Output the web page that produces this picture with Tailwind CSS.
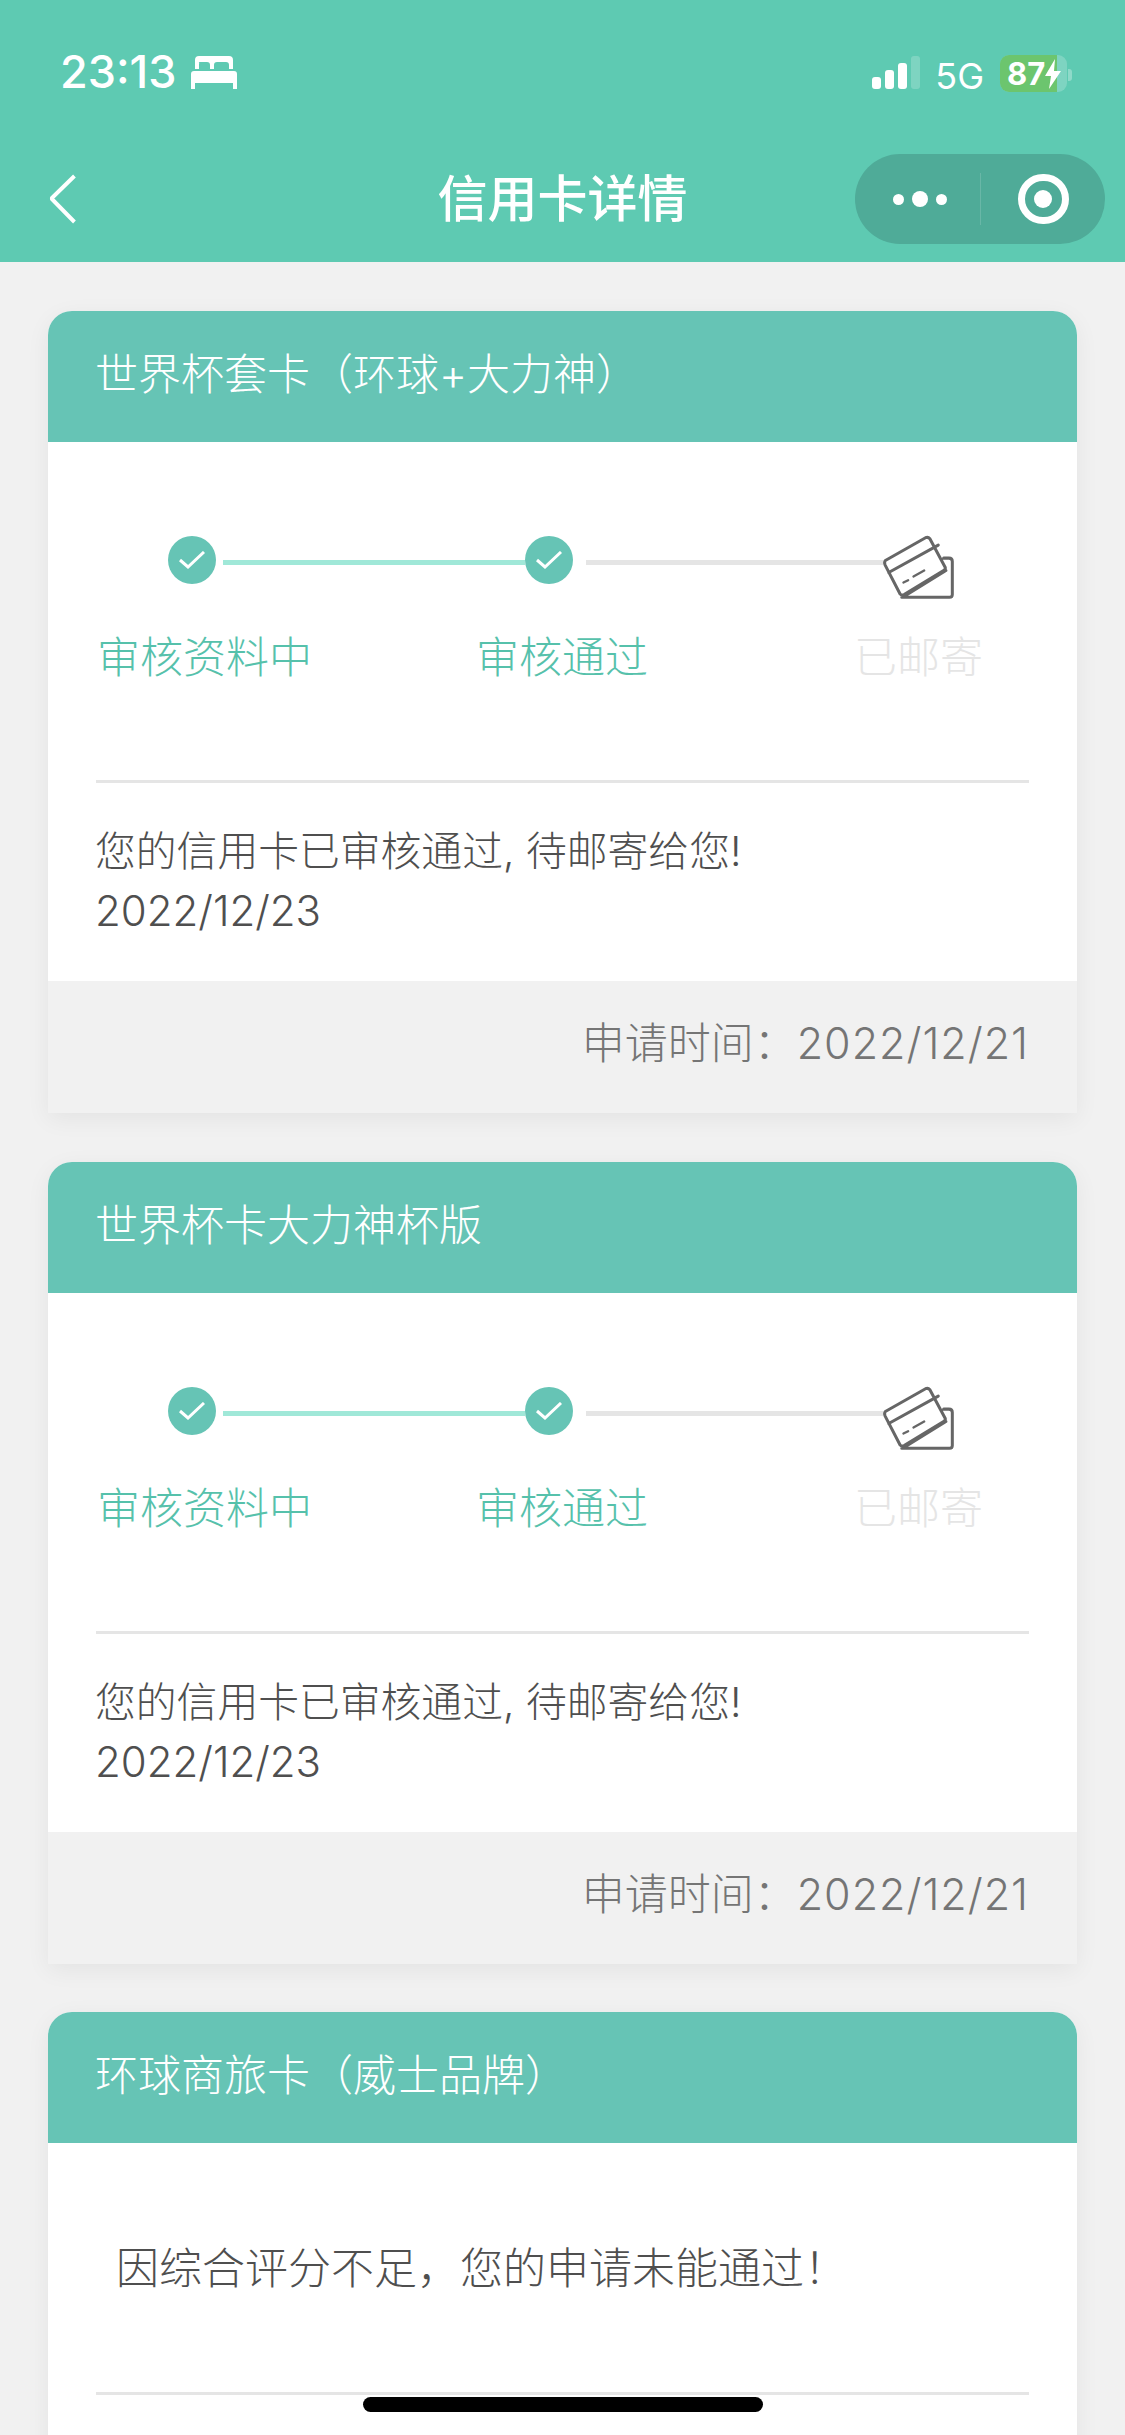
<!DOCTYPE html>
<html lang="zh-CN">
<head>
<meta charset="utf-8">
<title>信用卡详情</title>
<script src="https://cdn.jsdelivr.net/npm/@tailwindcss/browser@4"></script>
</head>
<body class="m-0">
<div class="relative w-[1125px] h-[2435px] overflow-hidden bg-[#f1f1f1] font-['Inter','Noto_Sans_CJK_SC',sans-serif]">
  <header class="h-[262px] bg-[#5ecab2] text-white">
    <div class="h-[154px] pt-[52px] pl-[60px] pr-[53px] flex items-start justify-between">
      <div class="flex items-center h-[40px]">
        <span class="text-[45px] leading-[40px] font-medium">23:13</span>
        <svg class="ml-[15px] mt-[1px]" width="46" height="33" viewBox="0 0 46 33" fill="#fff"><path d="M4 13V4a4 4 0 0 1 4-4h30a4 4 0 0 1 4 4v9h-4V9c0-2-1-3-3-3h-9c-2 0-3 1-3 3v4h-4V9c0-2-1-3-3-3h-9C9 6 8 7 8 9v4z"/><path d="M3 15h40a3 3 0 0 1 3 3v9H0v-9a3 3 0 0 1 3-3zM0 27h4v6H0zM42 27h4v6h-4z"/></svg>
      </div>
      <div class="flex items-end h-[38px]">
        <div class="flex items-end gap-[4px] h-[34px] mb-[1px]">
          <span class="w-[9px] h-[12px] rounded-[3px] bg-white"></span>
          <span class="w-[9px] h-[19px] rounded-[3px] bg-white"></span>
          <span class="w-[9px] h-[26px] rounded-[3px] bg-white"></span>
          <span class="w-[9px] h-[33px] rounded-[3px] bg-white/20"></span>
        </div>
        <span class="ml-[15px] text-[36px] leading-[30px] mb-[-1px]">5G</span>
        <div class="relative ml-[16px] w-[67px] h-[37px] mb-[-2px] flex items-center rounded-[9px] overflow-hidden bg-white/20">
          <span class="absolute left-0 top-0 h-full w-[57px] bg-[#6cc56e]"></span>
          <span class="relative ml-[7px] font-bold text-[31px] leading-[37px]">87</span>
          <svg class="relative ml-[-1px]" width="18" height="30" viewBox="0 0 18 30" fill="#fff"><path d="M11 0 1 17h6l-2 13L17 12h-7z"/></svg>
        </div>
        <span class="ml-[1px] mb-[9px] w-[4px] h-[12px] rounded-r-[3px] bg-white/30"></span>
      </div>
    </div>
    <div class="relative h-[90px] flex items-center justify-between pl-[48px] pr-[20px]">
      <svg width="30" height="50" viewBox="0 0 30 50" fill="none" stroke="#fff" stroke-width="4" stroke-linejoin="round"><path d="M27 2 4 24l0 1 23 23" transform="scale(.98 1)"/></svg>
      <h1 class="absolute left-0 right-0 text-center text-[50px] leading-[92px] font-medium">信用卡详情</h1>
      <div class="relative w-[250px] h-[90px] rounded-full bg-[#4fab98] flex items-center">
        <div class="w-[125px] flex items-center justify-center gap-[8px] pl-[5px]">
          <span class="w-[11px] h-[11px] rounded-full bg-white"></span>
          <span class="w-[16px] h-[16px] rounded-full bg-white"></span>
          <span class="w-[11px] h-[11px] rounded-full bg-white"></span>
        </div>
        <span class="w-px h-[52px] bg-white/15"></span>
        <div class="flex-1 flex items-center justify-center">
          <span class="w-[51px] h-[50px] rounded-full border-[7px] border-white flex items-center justify-center">
            <span class="w-[18px] h-[18px] rounded-full bg-white"></span>
          </span>
        </div>
      </div>
    </div>
  </header>

  <main class="pt-[49px] px-[48px] flex flex-col gap-[48.5px]">
    <section class="bg-white rounded-t-[24px] shadow-[0_6px_24px_rgba(0,0,0,0.06)]">
      <h2 class="h-[131px] pl-[47px] pt-[35px] rounded-t-[24px] bg-[#66c4b5] text-white text-[43px] leading-[56px] font-light">世界杯套卡（环球+大力神）</h2>
      <div class="h-[338px] pt-[94px]">
        <div class="flex items-start pl-[120px]">
          <span class="w-[48px] h-[48px] shrink-0 rounded-full bg-[#66c4b5] flex items-center justify-center"><svg width="26" height="18" viewBox="0 0 26 18" fill="none" stroke="#fff" stroke-width="3"><path d="M1 9l8 7L25 1"/></svg></span>
          <span class="ml-[7px] mt-[24px] w-[302px] h-[5px] bg-[#a0e8d8]"></span>
          <span class="w-[48px] h-[48px] shrink-0 rounded-full bg-[#66c4b5] flex items-center justify-center"><svg width="26" height="18" viewBox="0 0 26 18" fill="none" stroke="#fff" stroke-width="3"><path d="M1 9l8 7L25 1"/></svg></span>
          <span class="ml-[13px] mt-[24px] w-[297px] h-[5px] bg-[#e5e5e5]"></span>
          <svg class="shrink-0 ml-[-3px] mt-[-3px]" width="77" height="69" viewBox="300 100 230 206" fill="none" stroke="#666" stroke-width="9" stroke-linejoin="round" stroke-linecap="round"><path d="M365 292h143q8 0 8-8V185q0-10-10-10h-16M380 284 497 212M316 182 436 114q8-3 13 3l46 86q1 6-5 9L372 284q-7 3-12-2L315 195q-3-8 1-13zM326 218 474 136"/><path d="M370 248l14-7M400 230l32-18" stroke-width="7"/></svg>
        </div>
        <div class="flex pl-[49px] mt-[27px] text-[43px] leading-[56px] font-light">
          <span class="text-[#56c1ab]">审核资料中</span>
          <span class="ml-[164px] text-[#56c1ab]">审核通过</span>
          <span class="ml-[206px] text-[#e5e5e5]">已邮寄</span>
        </div>
      </div>
      <div class="mx-[48px] border-t-[3px] border-[#e5e5e5] pt-[39px] h-[201px] text-[#4f4f4f] text-[40.8px] leading-[59px] font-light">
        <p class="ml-[-1px]">您的信用卡已审核通过, 待邮寄给您!</p>
        <p class="ml-[-1px] text-[42px]">2022/12/23</p>
      </div>
      <div class="h-[132px] pr-[48px] bg-[#f1f1f1] text-right text-[#757575] text-[43px] leading-[124px] font-light">申请时间：<span class="tracking-[1px]">2022/12/21</span></div>
    </section>

    <section class="bg-white rounded-t-[24px] shadow-[0_6px_24px_rgba(0,0,0,0.06)]">
      <h2 class="h-[131px] pl-[47px] pt-[35px] rounded-t-[24px] bg-[#66c4b5] text-white text-[43px] leading-[56px] font-light">世界杯卡大力神杯版</h2>
      <div class="h-[338px] pt-[94px]">
        <div class="flex items-start pl-[120px]">
          <span class="w-[48px] h-[48px] shrink-0 rounded-full bg-[#66c4b5] flex items-center justify-center"><svg width="26" height="18" viewBox="0 0 26 18" fill="none" stroke="#fff" stroke-width="3"><path d="M1 9l8 7L25 1"/></svg></span>
          <span class="ml-[7px] mt-[24px] w-[302px] h-[5px] bg-[#a0e8d8]"></span>
          <span class="w-[48px] h-[48px] shrink-0 rounded-full bg-[#66c4b5] flex items-center justify-center"><svg width="26" height="18" viewBox="0 0 26 18" fill="none" stroke="#fff" stroke-width="3"><path d="M1 9l8 7L25 1"/></svg></span>
          <span class="ml-[13px] mt-[24px] w-[297px] h-[5px] bg-[#e5e5e5]"></span>
          <svg class="shrink-0 ml-[-3px] mt-[-3px]" width="77" height="69" viewBox="300 100 230 206" fill="none" stroke="#666" stroke-width="9" stroke-linejoin="round" stroke-linecap="round"><path d="M365 292h143q8 0 8-8V185q0-10-10-10h-16M380 284 497 212M316 182 436 114q8-3 13 3l46 86q1 6-5 9L372 284q-7 3-12-2L315 195q-3-8 1-13zM326 218 474 136"/><path d="M370 248l14-7M400 230l32-18" stroke-width="7"/></svg>
        </div>
        <div class="flex pl-[49px] mt-[27px] text-[43px] leading-[56px] font-light">
          <span class="text-[#56c1ab]">审核资料中</span>
          <span class="ml-[164px] text-[#56c1ab]">审核通过</span>
          <span class="ml-[206px] text-[#e5e5e5]">已邮寄</span>
        </div>
      </div>
      <div class="mx-[48px] border-t-[3px] border-[#e5e5e5] pt-[39px] h-[201px] text-[#4f4f4f] text-[40.8px] leading-[59px] font-light">
        <p class="ml-[-1px]">您的信用卡已审核通过, 待邮寄给您!</p>
        <p class="ml-[-1px] text-[42px]">2022/12/23</p>
      </div>
      <div class="h-[132px] pr-[48px] bg-[#f1f1f1] text-right text-[#757575] text-[43px] leading-[124px] font-light">申请时间：<span class="tracking-[1px]">2022/12/21</span></div>
    </section>

    <section class="bg-white rounded-t-[24px] shadow-[0_6px_24px_rgba(0,0,0,0.06)]">
      <h2 class="h-[131px] pl-[47px] pt-[35px] rounded-t-[24px] bg-[#66c4b5] text-white text-[43px] leading-[56px] font-light">环球商旅卡（威士品牌）</h2>
      <div class="h-[249px] pl-[68px] pt-[95px] text-[#4f4f4f] text-[43px] leading-[60px] font-light">因综合评分不足，您的申请未能通过！</div>
      <div class="mx-[48px] border-t-[3px] border-[#e5e5e5] h-[100px]"></div>
    </section>
  </main>

  <div class="absolute left-[363px] top-[2397px] w-[400px] h-[15px] rounded-full bg-black"></div>
</div>
</body>
</html>
